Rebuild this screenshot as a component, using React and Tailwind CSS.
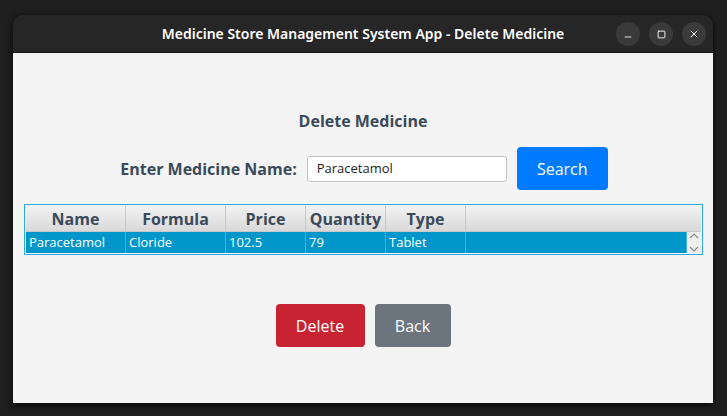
import { Minus, Square, X, ChevronUp, ChevronDown } from 'lucide-react';

const columns = [
  { label: 'Name', w: 'w-[100px]' },
  { label: 'Formula', w: 'w-[100px]' },
  { label: 'Price', w: 'w-[80px]' },
  { label: 'Quantity', w: 'w-[80px]' },
  { label: 'Type', w: 'w-[80px]' },
];

const row = ['Paracetamol', 'Cloride', '102.5', '79', 'Tablet'];

export default function App() {
  return (
    <div className="w-[727px] h-[416px] bg-[#1e1e1e] pt-[15px] pl-[13px] font-['Open_Sans',sans-serif]">
      <div className="w-[700px] h-[388px] flex flex-col rounded-t-[10px] overflow-hidden shadow-[0_2px_6px_rgba(0,0,0,0.8)]">
        {/* Title bar */}
        <div className="h-[38px] bg-[#262626] flex items-center relative border-b border-[#111]">
          <div className="flex-1 text-center text-white text-[14px] font-semibold font-['Noto_Sans',sans-serif]">
            Medicine Store Management System App - Delete Medicine
          </div>
          <div className="absolute right-[7px] top-[7px] flex gap-[9px]">
            <div className="w-6 h-6 rounded-full bg-[#3a3a3a] flex items-center justify-center text-white">
              <Minus size={10} strokeWidth={2} className="mt-[5px]" />
            </div>
            <div className="w-6 h-6 rounded-full bg-[#3a3a3a] flex items-center justify-center text-white">
              <Square size={9} strokeWidth={2.4} />
            </div>
            <div className="w-6 h-6 rounded-full bg-[#3a3a3a] flex items-center justify-center text-white">
              <X size={12} strokeWidth={2} />
            </div>
          </div>
        </div>

        {/* Content */}
        <div className="flex-1 bg-[#f4f4f4] flex flex-col items-center pt-[58px]">
          <div className="text-[16px] font-bold text-[#3b4a5a] leading-5">Delete Medicine</div>

          <div className="flex items-center mt-[16px] ml-[2px]">
            <span className="text-[16px] font-bold text-[#3b4a5a] mr-[10px]">Enter Medicine Name:</span>
            <div className="w-[200px] h-[26px] bg-white border border-[#c4c4c4] rounded-[3px] flex items-center px-[9px] text-[13px] text-[#222]">
              Paracetamol
            </div>
            <button className="ml-[10px] w-[91px] h-[43px] bg-[#007bff] rounded-[4px] text-white text-[16px]">Search</button>
          </div>

          {/* Table */}
          <div className="mt-[14px] w-[679px] self-start ml-[11px] border border-[#2aaae0] bg-[#f4f4f4] p-px">
            <div className="flex h-[26px] bg-gradient-to-b from-[#f2f2f2] to-[#d9d9d9] border-b border-[#c8c8c8]">
              {columns.map((c) => (
                <div key={c.label} className={`${c.w} border-r border-[#c8c8c8] flex items-center justify-center text-[16px] font-bold text-[#3b4a5a]`}>
                  {c.label}
                </div>
              ))}
              <div className="flex-1" />
            </div>
            <div className="flex h-[21px] bg-[#0096c9]">
              {columns.map((c, i) => (
                <div key={c.label} className={`${c.w} border-r border-[#3fb0d8] flex items-center pl-[3px] text-[13px] text-white`}>
                  {row[i]}
                </div>
              ))}
              <div className="flex-1 border-r border-[#3fb0d8]" />
              <div className="w-[14px] bg-[#efefef] flex flex-col items-center justify-between text-[#8a8a8a]">
                <svg width="10" height="8" viewBox="0 0 10 8" fill="none" stroke="currentColor" strokeWidth="1.2">
                  <path d="M1 6 L5 2 L9 6" />
                </svg>
                <svg width="10" height="8" viewBox="0 0 10 8" fill="none" stroke="currentColor" strokeWidth="1.2">
                  <path d="M1 2 L5 6 L9 2" />
                </svg>
              </div>
            </div>
          </div>

          <div className="flex gap-[10px] mt-[49px]">
            <button className="w-[89px] h-[43px] bg-[#c82333] rounded-[4px] text-white text-[16px]">Delete</button>
            <button className="w-[76px] h-[43px] bg-[#6c757d] rounded-[4px] text-white text-[16px]">Back</button>
          </div>
        </div>
      </div>
    </div>
  );
}
